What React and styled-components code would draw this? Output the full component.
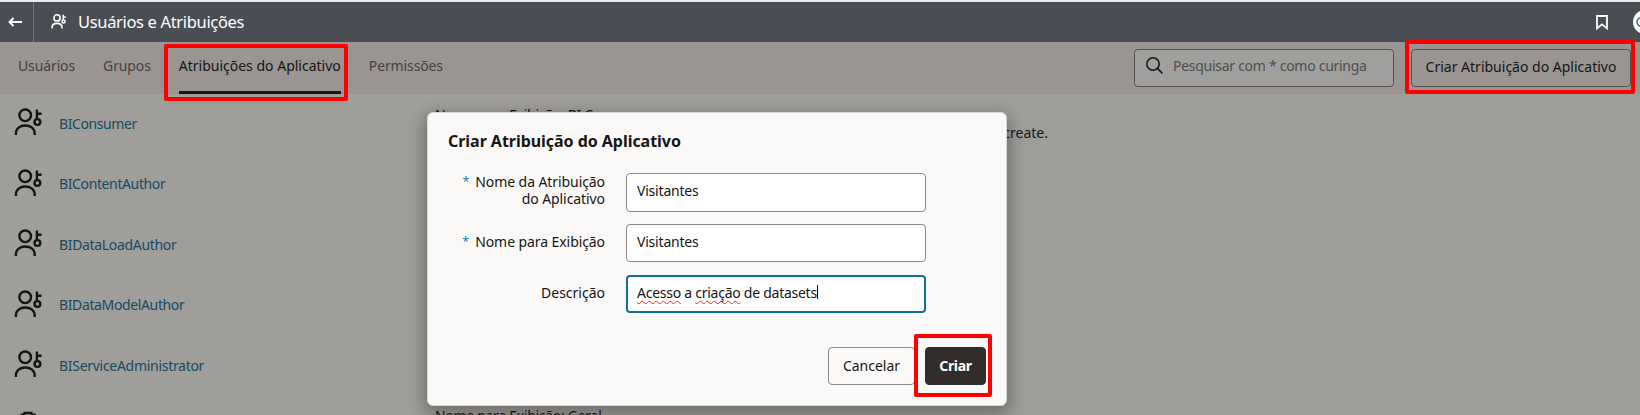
import React from 'react';
import styled, { createGlobalStyle } from 'styled-components';

const Global = createGlobalStyle`
  * { box-sizing: border-box; }
  body { margin: 0; overflow: hidden; background: #9f9e9b; }
  button, input { font-family: inherit; }
  svg { flex-shrink: 0; }
`;
const Page = styled.div`
  position: relative;
  width: 1640px;
  height: 415px;
  overflow: hidden;
  font-family: 'Noto Sans', sans-serif;
  font-size: 14px;
  color: #161513;
  background: #9f9e9b;
`;
const Header = styled.header`
  display: flex;
  align-items: center;
  height: 42px;
  border-top: 2px solid #e8e9e9;
  background: #4a4d54;
  color: #fff;
`;
const BackButton = styled.div`
  display: flex;
  align-items: center;
  width: 34px;
  height: 100%;
  padding-left: 8px;
  border-right: 1px solid #74767b;
`;
const HeaderTitle = styled.h1`
  display: flex;
  align-items: center;
  flex: 1;
  gap: 12px;
  margin: 0;
  padding: 0 0 1px 17px;
  font-size: 16.5px;
  font-weight: 400;
`;
const HeaderActions = styled.div`
  display: flex;
  align-items: center;
  gap: 25px;
  width: 44px;
  flex-shrink: 0;
`;
const Label = styled.span`
  white-space: nowrap;
  letter-spacing: ${(p) => p.$ls || 0}px;
`;
const Toolbar = styled.div`
  display: flex;
  height: 52px;
  padding: 0 9px 0 18px;
  background: #9a9593;
`;
const Tabs = styled.nav`
  display: flex;
  flex: 1;
  gap: 28px;
`;
const Tab = styled.a`
  height: 52px;
  padding-top: 14px;
  line-height: 20px;
  color: ${(p) => (p.$active ? '#161513' : '#44403e')};
  border-bottom: ${(p) => (p.$active ? '3px solid #161513' : '0')};
`;
const Search = styled.div`
  display: flex;
  align-items: center;
  gap: 10px;
  width: 260px;
  height: 38px;
  margin: 7px 17px 0 0;
  padding: 0 0 5px 11px;
  border: 1px solid #555250;
  border-radius: 4px;
  background: #9f9f9e;
  color: #504e4c;
`;
const Button = styled.button`
  width: ${(p) => p.$w}px;
  height: 38px;
  margin: ${(p) => p.$m || 0};
  padding: 0 0 ${(p) => (p.$dim ? 4 : 2)}px;
  border: 1px solid ${(p) => (p.$primary ? '#312d2a' : p.$dim ? '#555250' : '#8b8987')};
  border-radius: 4px;
  background: ${(p) => (p.$primary ? '#312d2a' : 'transparent')};
  color: ${(p) => (p.$primary ? '#fff' : '#161513')};
  font-size: 14px;
  font-weight: ${(p) => (p.$primary ? 700 : 400)};
`;
const Content = styled.main`
  display: flex;
`;
const RoleList = styled.ul`
  width: 435px;
  margin: 0;
  padding: 0;
  list-style: none;
`;
const RoleItem = styled.li`
  display: flex;
  align-items: center;
  gap: 17px;
  height: 60.5px;
  padding: 0 0 2px 14px;
  color: #19495f;
`;
const RoleGlyph = styled.span`
  display: flex;
  margin-bottom: 2px;
  color: #161513;
`;
const Details = styled.div`
  flex: 1;
  padding-top: 11px;
  line-height: 19px;
`;
const DetailLine = styled.div`
  display: flex;
  height: ${(p) => p.$h || 19}px;
  margin-bottom: ${(p) => p.$after || 0}px;
`;
const Permission = styled(DetailLine)`
  justify-content: flex-end;
  width: 613px;
`;
const Dialog = styled.section`
  position: absolute;
  left: 427px;
  top: 112px;
  width: 580px;
  height: 294px;
  padding: 17px 20px;
  border: 1px solid #d9d8d6;
  border-radius: 6px;
  background: #fbf9f8;
  box-shadow: 0 6px 16px 4px rgba(0, 0, 0, 0.28);
`;
const DialogTitle = styled.h2`
  height: 24px;
  margin: 0 0 19px;
  line-height: 23px;
  font-size: 16px;
  font-weight: 700;
`;
const Field = styled.label`
  display: flex;
  height: 39px;
  margin-bottom: 12px;
`;
const FieldLabel = styled.span`
  display: flex;
  justify-content: flex-end;
  gap: 6px;
  width: 157px;
  margin-right: 21px;
  padding-top: ${(p) => (p.$two ? 0 : 9)}px;
  line-height: 17px;
  text-align: right;
`;
const Star = styled.span`
  font-size: 12.5px;
  color: #227e9e;
`;
const Input = styled.span`
  display: flex;
  align-items: center;
  width: 300px;
  height: ${(p) => p.$h || 38}px;
  padding: 0 0 4px ${(p) => (p.$focus ? 9 : 10)}px;
  border: ${(p) => (p.$focus ? '2px solid #0f7195' : '1px solid #8b8987')};
  border-radius: 4px;
  background: #fff;
`;
const Misspelled = styled.span`
  text-decoration: underline wavy #f22 1.4px;
  text-decoration-skip-ink: none;
  text-underline-offset: 2px;
`;
const Caret = styled.span`
  width: 1px;
  height: 14px;
  background: #000;
`;
const Actions = styled.div`
  display: flex;
  justify-content: flex-end;
  gap: 10px;
  padding-top: 21px;
`;
const Highlight = styled.div`
  position: absolute;
  left: ${(p) => p.$x}px;
  top: ${(p) => p.$y}px;
  width: ${(p) => p.$w}px;
  height: ${(p) => p.$h}px;
  border: 4px solid #fe0000;
  border-radius: 2px;
`;

const RoleIcon = ({ size, stroke = 2.4 }) => (
  <svg width={size} height={size} viewBox="0 0 28 28" fill="none" stroke="currentColor" strokeWidth={stroke}>
    <circle cx="11.2" cy="7.3" r="5.8" />
    <path d="M1.9 27v-1.5c0-4.9 4-8 9.4-8s9.4 3.1 9.4 8V27" />
    <circle cx="23.4" cy="14" r="2.9" />
    <path d="M22.9 11.2V1.5M22.9 5.7H27.6" />
  </svg>
);
const GearIcon = () => (
  <svg width="28" height="28" viewBox="0 0 28 28" fill="none" stroke="currentColor" strokeWidth="2.4">
    <path d="M10.5 5.5V2h7v3.5l3-2 3.5 4-2.5 3 .5 2.500H26v4h-4l-1 3 2.500 2.500-3.500 3.500-3-2V26h-7v-3.500l-3 2L4 20.500 6.500 18 6 16H2v-4h4l1-2.500L4.500 7 8 3.500z" />
    <circle cx="14" cy="14" r="4" />
  </svg>
);

const roles = [
  ['BIConsumer', -0.42],
  ['BIContentAuthor', -0.38],
  ['BIDataLoadAuthor', -0.33],
  ['BIDataModelAuthor', -0.37],
  ['BIServiceAdministrator', -0.29],
];

export default function App() {
  return (
    <Page>
      <Global />
      <Header>
        <BackButton>
          <svg width="15" height="12" viewBox="0 0 15 12" fill="none" stroke="#fff" strokeWidth="1.9">
            <path d="M14 6H1.5M5.500 2L1.500 6l4 4" />
          </svg>
        </BackButton>
        <HeaderTitle>
          <RoleIcon size={15} stroke={2.9} />
          <Label $ls={-0.34}>Usuários e Atribuições</Label>
        </HeaderTitle>
        <HeaderActions>
          <svg width="12" height="15" viewBox="0 0 12 15" fill="none" stroke="#fff" strokeWidth="1.8">
            <path d="M1 1h10v12.400L6 9.400l-5 4z" />
          </svg>
          <svg width="24" height="24" viewBox="0 0 24 24">
            <circle cx="12" cy="12" r="12" fill="#fff" />
            <circle cx="8.500" cy="12" r="4.500" fill="none" stroke="#4a6d8c" strokeWidth="1.500" />
          </svg>
        </HeaderActions>
      </Header>
      <Toolbar>
        <Tabs>
          <Tab><Label $ls={-0.12}>Usuários</Label></Tab>
          <Tab><Label $ls={-0.12}>Grupos</Label></Tab>
          <Tab $active><Label>Atribuições do Aplicativo</Label></Tab>
          <Tab><Label $ls={-0.12}>Permissões</Label></Tab>
        </Tabs>
        <Search>
          <svg width="17" height="17" viewBox="0 0 17 17" fill="none" stroke="#161513" strokeWidth="1.500">
            <circle cx="7" cy="7" r="6.200" />
            <path d="M11.400 11.400l5 5" />
          </svg>
          <Label $ls={-0.28}>Pesquisar com * como curinga</Label>
        </Search>
        <Button $w={220} $dim $m="7px 0 0"><Label>Criar Atribuição do Aplicativo</Label></Button>
      </Toolbar>
      <Content>
        <RoleList>
          {roles.map(([name, ls]) => (
            <RoleItem key={name}>
              <RoleGlyph><RoleIcon size={28} /></RoleGlyph>
              <Label $ls={ls}>{name}</Label>
            </RoleItem>
          ))}
          <RoleItem>
            <RoleGlyph><GearIcon /></RoleGlyph>
          </RoleItem>
        </RoleList>
        <Details>
          <DetailLine $h={18}><Label $ls={-0.3}>Nome para Exibição: BI Consumer</Label></DetailLine>
          <Permission $after={264}><Label>create.</Label></Permission>
          <DetailLine><Label $ls={-0.29}>Nome para Exibição: Geral</Label></DetailLine>
        </Details>
      </Content>
      <Dialog>
        <DialogTitle><Label $ls={-0.04}>Criar Atribuição do Aplicativo</Label></DialogTitle>
        <Field>
          <FieldLabel $two>
            <Star>*</Star>
            <Label $ls={-0.08}>Nome da Atribuição<br />do Aplicativo</Label>
          </FieldLabel>
          <Input $h={39}><Label $ls={-0.2}>Visitantes</Label></Input>
        </Field>
        <Field>
          <FieldLabel>
            <Star>*</Star>
            <Label $ls={-0.08}>Nome para Exibição</Label>
          </FieldLabel>
          <Input><Label $ls={-0.2}>Visitantes</Label></Input>
        </Field>
        <Field>
          <FieldLabel><Label>Descrição</Label></FieldLabel>
          <Input $focus>
            <Label $ls={-0.26}><Misspelled>Acesso</Misspelled> a <Misspelled>criação</Misspelled> de datasets</Label>
            <Caret />
          </Input>
        </Field>
        <Actions>
          <Button $w={87}><Label>Cancelar</Label></Button>
          <Button $w={61} $primary><Label $ls={-0.3}>Criar</Label></Button>
        </Actions>
      </Dialog>
      <Highlight $x={164} $y={44} $w={184} $h={57} />
      <Highlight $x={1405} $y={40} $w={230} $h={54} />
      <Highlight $x={914} $y={334} $w={78} $h={63} />
    </Page>
  );
}
